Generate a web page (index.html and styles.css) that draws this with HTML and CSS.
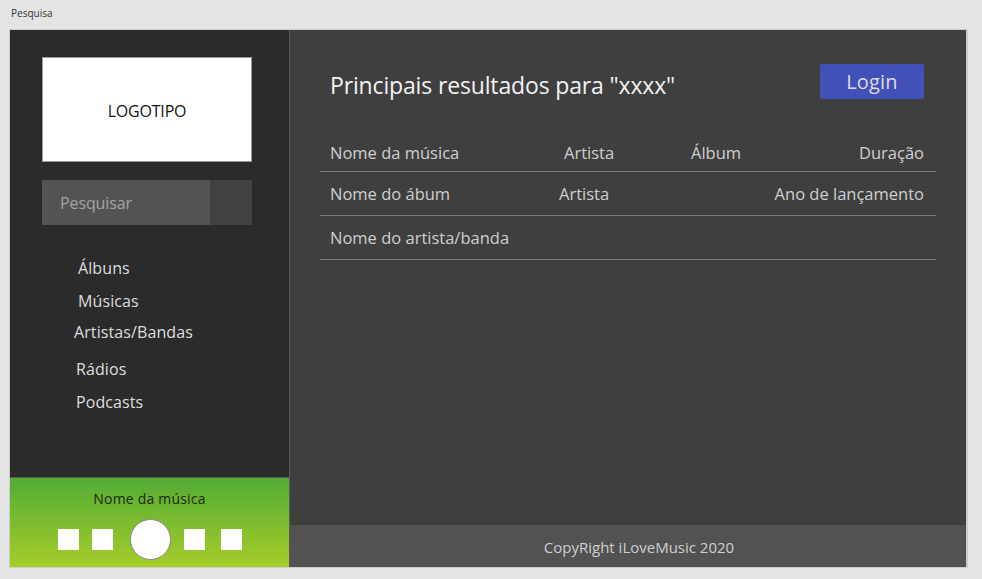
FILE: index.html
```html
<!DOCTYPE html>
<html lang="pt">
<head>
<meta charset="utf-8">
<title>Pesquisa</title>
<link rel="stylesheet" href="styles.css">
</head>
<body>
<div class="page-label">Pesquisa</div>
<div class="frame">
  <aside class="sidebar">
    <div class="logo">LOGOTIPO</div>
    <div class="search">
      <div class="search-input">Pesquisar</div>
      <div class="search-btn"></div>
    </div>
    <nav class="nav">
      <a class="nav-item n1">Álbuns</a>
      <a class="nav-item n2">Músicas</a>
      <a class="nav-item n3">Artistas/Bandas</a>
      <a class="nav-item n4">Rádios</a>
      <a class="nav-item n5">Podcasts</a>
    </nav>
    <div class="player">
      <div class="player-title">Nome da música</div>
      <div class="controls">
        <span class="ctl sq s1"></span>
        <span class="ctl sq s2"></span>
        <span class="ctl play"></span>
        <span class="ctl sq s3"></span>
        <span class="ctl sq s4"></span>
      </div>
    </div>
  </aside>
  <main class="main">
    <div class="content">
      <header class="header">
        <h1 class="title">Principais resultados para "xxxx"</h1>
        <button class="login">Login</button>
      </header>
      <div class="results">
        <div class="row">
          <span class="c1">Nome da música</span>
          <span class="c2">Artista</span>
          <span class="c3">Álbum</span>
          <span class="c4">Duração</span>
        </div>
        <div class="row">
          <span class="c1b">Nome do ábum</span>
          <span class="c2b">Artista</span>
          <span class="c4">Ano de lançamento</span>
        </div>
        <div class="row">
          <span class="c1">Nome do artista/banda</span>
        </div>
      </div>
    </div>
    <footer class="footer">CopyRight iLoveMusic 2020</footer>
  </main>
</div>
</body>
</html>
```

FILE: styles.css
```css
* { box-sizing: border-box; }
html, body { margin: 0; padding: 0; }
body {
  background: #e4e4e4;
  font-family: "Open Sans", "Noto Sans", sans-serif;
  width: 982px;
  height: 579px;
  overflow: hidden;
}
.page-label {
  height: 29px;
  padding: 6px 0 0 11px;
  font-size: 10px;
  color: #333;
  line-height: 14px;
}
.frame {
  margin-left: 9px;
  width: 959px;
  height: 539px;
  border-top: 1px solid #cdcdcd;
  border-left: 1px solid #cdcdcd;
  border-right: 2px solid #cdcdcd;
  border-bottom: 1px solid #cdcdcd;
  display: flex;
}
.sidebar {
  width: 280px;
  background: #2b2b2b;
  border-right: 1px solid #5a5a5a;
  display: flex;
  flex-direction: column;
}
.logo {
  margin: 27px 0 0 32px;
  width: 210px;
  height: 105px;
  background: #fff;
  border: 1px solid #999;
  display: flex;
  align-items: center;
  justify-content: center;
  font-size: 16px;
  color: #111;
  letter-spacing: -0.2px;
  padding-top: 2px;
}
.search {
  margin: 18px 0 0 32px;
  width: 210px;
  height: 45px;
  display: flex;
}
.search-input {
  flex: 1;
  background: #535353;
  color: #a4a4a4;
  font-size: 16px;
  padding-left: 18px;
  display: flex;
  align-items: center;
  letter-spacing: -0.1px;
}
.search-btn {
  width: 42px;
  background: #414141;
}
.nav {
  display: flex;
  flex-direction: column;
  flex: 1;
  padding-top: 32px;
}
.nav-item {
  color: #dedede;
  font-size: 16px;
  line-height: 22px;
  letter-spacing: 0.1px;
}
.n1 { margin-left: 68px; }
.n2 { margin-left: 68px; margin-top: 11px; }
.n3 { margin-left: 64px; margin-top: 9px; }
.n4 { margin-left: 66px; margin-top: 15px; }
.n5 { margin-left: 66px; margin-top: 11px; }
.player {
  height: 90px;
  border-top: 1px solid #5a5a5a;
  background: linear-gradient(#53ab35, #a6cd2a);
  display: flex;
  flex-direction: column;
  align-items: center;
}
.player-title {
  margin-top: 11px;
  font-size: 14px;
  color: #1c2a10;
  line-height: 20px;
  letter-spacing: 0.2px;
}
.controls {
  margin-top: 10px;
  display: flex;
  align-items: center;
}
.ctl { display: block; background: #fff; }
.sq { width: 21px; height: 21px; }
.s1 { margin-right: 13px; }
.s2 { margin-right: 17px; }
.s3 { margin-left: 13px; margin-right: 16px; }
.play {
  width: 41px;
  height: 41px;
  border-radius: 50%;
  border: 1px solid #888;
}
.main {
  flex: 1;
  background: #3f3f3f;
  display: flex;
  flex-direction: column;
}
.content {
  flex: 1;
  padding: 34px 30px 0 30px;
}
.header {
  display: flex;
  justify-content: space-between;
  align-items: flex-start;
  padding: 0 12px 0 10px;
}
.title {
  margin: 4px 0 0 0;
  font-weight: normal;
  font-size: 23px;
  color: #f2f2f2;
  letter-spacing: -0.15px;
  line-height: 34px;
}
.login {
  width: 104px;
  height: 35px;
  background: #4151b7;
  border: none;
  border-radius: 2px;
  color: #dcdcdc;
  font-family: inherit;
  font-size: 20px;
  letter-spacing: 0.2px;
  padding: 0;
}
.results { margin-top: 31px; }
.row {
  height: 44px;
  border-bottom: 1px solid #7a7a7a;
  display: flex;
  align-items: center;
  padding: 0 12px 0 10px;
  font-size: 16.5px;
  color: #cfcfcf;
  letter-spacing: 0;
}
.row:first-child { height: 39px; }
.c1 { width: 234px; }
.c1b { width: 229px; }
.c2 { width: 127px; }
.c2b { width: 120px; }
.c3 { width: 100px; }
.c4 { margin-left: auto; }
.footer {
  height: 42px;
  background: #525252;
  color: #cfcfcf;
  font-size: 15px;
  display: flex;
  align-items: center;
  justify-content: center;
  letter-spacing: 0;
  padding: 2px 0 0 22px;
}
```
